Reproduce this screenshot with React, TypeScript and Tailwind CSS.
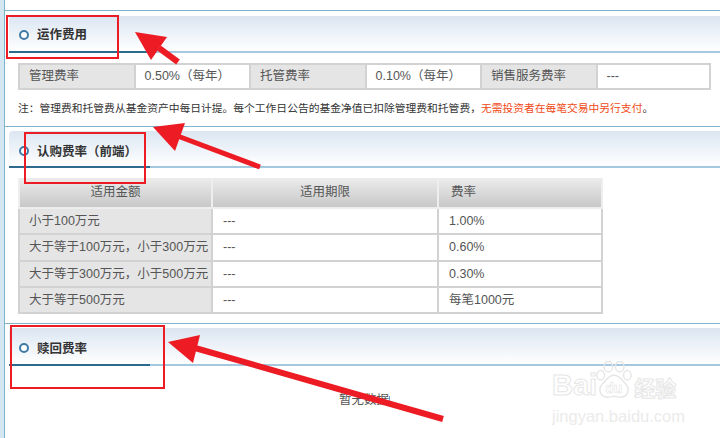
const cjk = "font-['Liberation_Sans','Noto_Sans_CJK_SC',sans-serif]";

function SectionHead({ title, className, pad }: { title: string; className: string; pad: string }) {
  return (
    <div className={`relative bg-gradient-to-b from-[#dbe6f2] to-white border-b-2 border-[#a4c8e0] rounded-tl-sm ${className}`}>
      <div className="absolute left-0 bottom-[-2px] w-[141px] h-[2px] bg-[#2c6a8e]" />
      <div className={`flex items-center h-full pl-[10px] ${pad}`}>
        <span className="w-[10px] h-[10px] rounded-full border-2 border-[#3f7aa6] bg-white" />
        <span className="ml-[8px] mt-[2px] text-[12.5px] font-bold text-[#333]">{title}</span>
      </div>
    </div>
  );
}

const rows = [
  ["小于100万元", "---", "1.00%"],
  ["大于等于100万元，小于300万元", "---", "0.60%"],
  ["大于等于300万元，小于500万元", "---", "0.30%"],
  ["大于等于500万元", "---", "每笔1000元"],
];

const arrows = [
  { tail: [178, 62, 159, 48], width: 6, head: "135,32 167,37 151,60" },
  { tail: [260, 167, 175, 135], width: 5, head: "153,127 185,123 175,151" },
  { tail: [443, 419, 195, 348], width: 6, head: "168,342 200,335 193,363" },
];

export default function App() {
  return (
    <div className={`relative flex w-[720px] h-[438px] overflow-hidden bg-white text-[12.5px] text-[#555] ${cjk}`}>
      <div className="w-[5px] h-full bg-[#d5e6f3] border-r border-[#7fb3cc]" />
      <div className="flex-1 pt-[10px]">
        {/* 运作费用 */}
        <div className="border-t border-[#7fb3cc] pl-[4px]">
          <SectionHead title="运作费用" className="h-[37px] mt-[5px]" pad="pt-[2px]" />
          <div className="ml-[9px] mt-[10px] w-[693px] h-[27px] flex bg-[#d2d2d2] p-[2px] gap-[2px]">
            <div className="w-[113.5px] bg-[#e5e5e5] pl-[9px] leading-[23px]">管理费率</div>
            <div className="w-[113.5px] bg-white pl-[9px] leading-[23px]">0.50%（每年）</div>
            <div className="w-[113.5px] bg-[#e5e5e5] pl-[9px] leading-[23px]">托管费率</div>
            <div className="w-[113.5px] bg-white pl-[9px] leading-[23px]">0.10%（每年）</div>
            <div className="w-[113.5px] bg-[#e5e5e5] pl-[9px] leading-[23px]">销售服务费率</div>
            <div className="flex-1 bg-white pl-[9px] leading-[23px]">---</div>
          </div>
          <p className="ml-[9px] mt-[10px] text-[10.77px] leading-[16px] text-[#333] whitespace-nowrap">
            注：管理费和托管费从基金资产中每日计提。每个工作日公告的基金净值已扣除管理费和托管费，<span className="text-[#f04a16]">无需投资者在每笔交易中另行支付</span>。
          </p>
        </div>

        {/* 认购费率 */}
        <div className="mt-[10px] border-t border-[#7fb3cc] pl-[4px]">
          <SectionHead title="认购费率（前端）" className="h-[37px] mt-[4px]" pad="pt-[5px]" />
          <div className="ml-[9px] mt-[10px] w-[585px] bg-[#d2d2d2] p-[2px]">
            <div className="grid grid-cols-[191px_224px_1fr] gap-[2px] bg-[#eeeeee] -m-[2px] mb-0 px-[2px] pb-[2px]">
              <div className="h-[29px] bg-gradient-to-b from-[#ececec] to-[#c8c8c8] text-center leading-[29px]">适用金额</div>
              <div className="h-[29px] bg-gradient-to-b from-[#ececec] to-[#c8c8c8] text-center leading-[29px]">适用期限</div>
              <div className="h-[29px] bg-gradient-to-b from-[#ececec] to-[#c8c8c8] pl-[12px] leading-[29px]">费率</div>
            </div>
            <div className="grid grid-cols-[191px_224px_1fr] gap-[2px]">
              {rows.map((r) => (
                <div key={r[0]} className="contents">
                  <div className="h-[24.3px] bg-[#e5e5e5] pl-[9px] leading-[24px] whitespace-nowrap">{r[0]}</div>
                  <div className="h-[24.3px] bg-white pl-[10px] leading-[24px]">{r[1]}</div>
                  <div className="h-[24.3px] bg-white pl-[10px] leading-[24px]">{r[2]}</div>
                </div>
              ))}
            </div>
          </div>
        </div>

        {/* 赎回费率 */}
        <div className="mt-[9px] border-t border-[#7fb3cc] pl-[4px]">
          <SectionHead title="赎回费率" className="h-[38px] mt-[4px]" pad="pt-[4px]" />
          <p className="mt-[26px] pl-[330px] leading-[16px] flex items-center">
            暂无数据<span className="w-[1px] h-[9px] bg-[#6b9bd0]" />
          </p>
        </div>
      </div>

      {/* Red annotations */}
      <div className="absolute left-[6px] top-[15px] w-[113px] h-[44px] border-2 border-[#ed1c24]" />
      <div className="absolute left-[24px] top-[132px] w-[122px] h-[52px] border-2 border-[#ed1c24]" />
      <div className="absolute left-[10px] top-[325px] w-[155px] h-[64px] border-2 border-[#ed1c24]" />
      <svg className="absolute inset-0" width="720" height="438">
        {arrows.map((a) => (
          <g key={a.head}>
            <line x1={a.tail[0]} y1={a.tail[1]} x2={a.tail[2]} y2={a.tail[3]} stroke="#ed1c24" strokeWidth={a.width} />
            <polygon points={a.head} fill="#ed1c24" />
          </g>
        ))}
      </svg>

      {/* Baidu watermark */}
      <div className="absolute left-[552px] top-[361px] w-[132px] font-bold text-white [-webkit-text-stroke:1px_#e6e6e6]">
        <div className="flex items-end h-[40px]">
          <span className="text-[29px] leading-[32px]">Bai</span>
          <div className="relative -ml-[2px] w-[38px] h-[40px]">
            <svg className="absolute inset-0" width="38" height="40" viewBox="0 0 38 42" fill="none" stroke="#e6e6e6" strokeWidth="1.5">
              <ellipse cx="13" cy="6" rx="4.5" ry="5.5" />
              <ellipse cx="25" cy="6" rx="4.5" ry="5.5" />
              <ellipse cx="5" cy="15" rx="4" ry="5" />
              <ellipse cx="33" cy="15" rx="4" ry="5" />
              <path d="M19 15c6 0 8 5 12 9 5 5 3 14-5 14-3 0-5-1-7-1s-4 1-7 1c-8 0-10-9-5-14 4-4 6-9 12-9z" />
            </svg>
            <span className="absolute left-[10px] top-[18px] text-[14px] leading-[18px] [-webkit-text-stroke:0.6px_#e6e6e6]">du</span>
          </div>
          <span className="text-[21px] leading-[28px] ml-[1px] font-['Noto_Sans_CJK_SC',sans-serif]">经验</span>
        </div>
        <div className="mt-[6px] text-[16.5px] leading-[18px] font-normal text-[#ebebeb] [-webkit-text-stroke:0px]">jingyan.baidu.com</div>
      </div>
    </div>
  );
}
